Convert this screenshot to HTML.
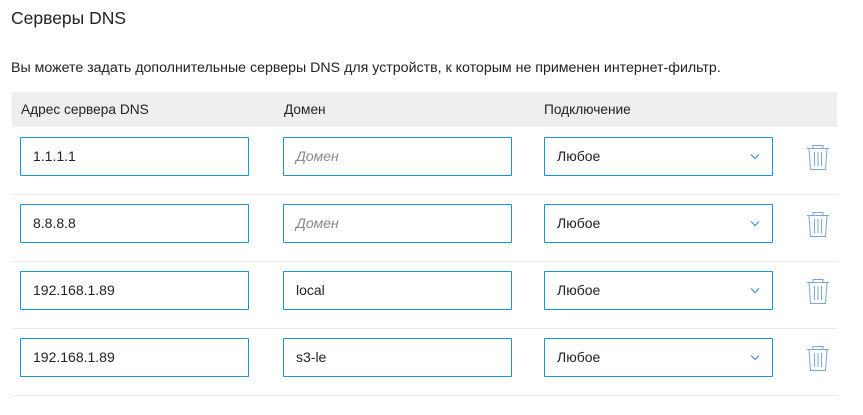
<!DOCTYPE html>
<html><head><meta charset="utf-8"><style>
body{margin:0;width:863px;height:415px;background:#fff;font-family:"Liberation Sans",sans-serif;color:#222;position:relative;overflow:hidden}
.a{position:absolute}
.t{left:11px;top:8px;font-size:17.5px;color:#222}
.d{left:11px;top:60px;font-size:14.2px;color:#222}
.h{left:12px;top:92px;width:825px;height:35px;background:#edeef0}
.h span{position:absolute;top:10px;font-size:13.7px;color:#222}
.sep{left:12px;width:825px;height:1px;background:#e8e9eb}
.in{font-size:14px;line-height:37px;padding-left:12px;box-sizing:border-box;width:229px;height:39px;border:1px solid #1a96d4;border-radius:1px}
.ph{color:#888;font-style:italic}
.chev{position:absolute;right:12px;top:15px}
</style></head><body>
<div class="a t">Серверы DNS</div>
<div class="a d">Вы можете задать дополнительные серверы DNS для устройств, к которым не применен интернет-фильтр.</div>
<div class="a h"><span style="left:9px">Адрес сервера DNS</span><span style="left:272px">Домен</span><span style="left:532px">Подключение</span></div>

<div class="a sep" style="top:194px"></div>
<div class="a sep" style="top:261px"></div>
<div class="a sep" style="top:328px"></div>
<div class="a sep" style="top:395px"></div>

<div class="a in" style="left:20px;top:137px">1.1.1.1</div>
<div class="a in ph" style="left:283px;top:137px">Домен</div>
<div class="a in" style="left:544px;top:137px">Любое<svg class="chev" width="10" height="7" viewBox="0 0 10 7"><path d="M1 1.5L5 5.5L9 1.5" fill="none" stroke="#4a90c8" stroke-width="1.2"/></svg></div>

<div class="a in" style="left:20px;top:204px">8.8.8.8</div>
<div class="a in ph" style="left:283px;top:204px">Домен</div>
<div class="a in" style="left:544px;top:204px">Любое<svg class="chev" width="10" height="7" viewBox="0 0 10 7"><path d="M1 1.5L5 5.5L9 1.5" fill="none" stroke="#4a90c8" stroke-width="1.2"/></svg></div>

<div class="a in" style="left:20px;top:271px">192.168.1.89</div>
<div class="a in" style="left:283px;top:271px">local</div>
<div class="a in" style="left:544px;top:271px">Любое<svg class="chev" width="10" height="7" viewBox="0 0 10 7"><path d="M1 1.5L5 5.5L9 1.5" fill="none" stroke="#4a90c8" stroke-width="1.2"/></svg></div>

<div class="a in" style="left:20px;top:338px">192.168.1.89</div>
<div class="a in" style="left:283px;top:338px">s3-le</div>
<div class="a in" style="left:544px;top:338px">Любое<svg class="chev" width="10" height="7" viewBox="0 0 10 7"><path d="M1 1.5L5 5.5L9 1.5" fill="none" stroke="#4a90c8" stroke-width="1.2"/></svg></div>

<svg class="a" style="left:806px;top:144px" width="24" height="27" viewBox="0 0 24 27"><g fill="none" stroke="#7aa6d8" stroke-width="1"><path d="M1 4.5H23"/><path d="M7 4.5V1.5H17V4.5"/><path d="M3 4.5L4.5 25.5H19.5L21 4.5"/><path d="M8.5 8V22M12 8V22M15.5 8V22"/></g></svg>
<svg class="a" style="left:806px;top:211px" width="24" height="27" viewBox="0 0 24 27"><g fill="none" stroke="#7aa6d8" stroke-width="1"><path d="M1 4.5H23"/><path d="M7 4.5V1.5H17V4.5"/><path d="M3 4.5L4.5 25.5H19.5L21 4.5"/><path d="M8.5 8V22M12 8V22M15.5 8V22"/></g></svg>
<svg class="a" style="left:806px;top:278px" width="24" height="27" viewBox="0 0 24 27"><g fill="none" stroke="#7aa6d8" stroke-width="1"><path d="M1 4.5H23"/><path d="M7 4.5V1.5H17V4.5"/><path d="M3 4.5L4.5 25.5H19.5L21 4.5"/><path d="M8.5 8V22M12 8V22M15.5 8V22"/></g></svg>
<svg class="a" style="left:806px;top:345px" width="24" height="27" viewBox="0 0 24 27"><g fill="none" stroke="#7aa6d8" stroke-width="1"><path d="M1 4.5H23"/><path d="M7 4.5V1.5H17V4.5"/><path d="M3 4.5L4.5 25.5H19.5L21 4.5"/><path d="M8.5 8V22M12 8V22M15.5 8V22"/></g></svg>
</body></html>
